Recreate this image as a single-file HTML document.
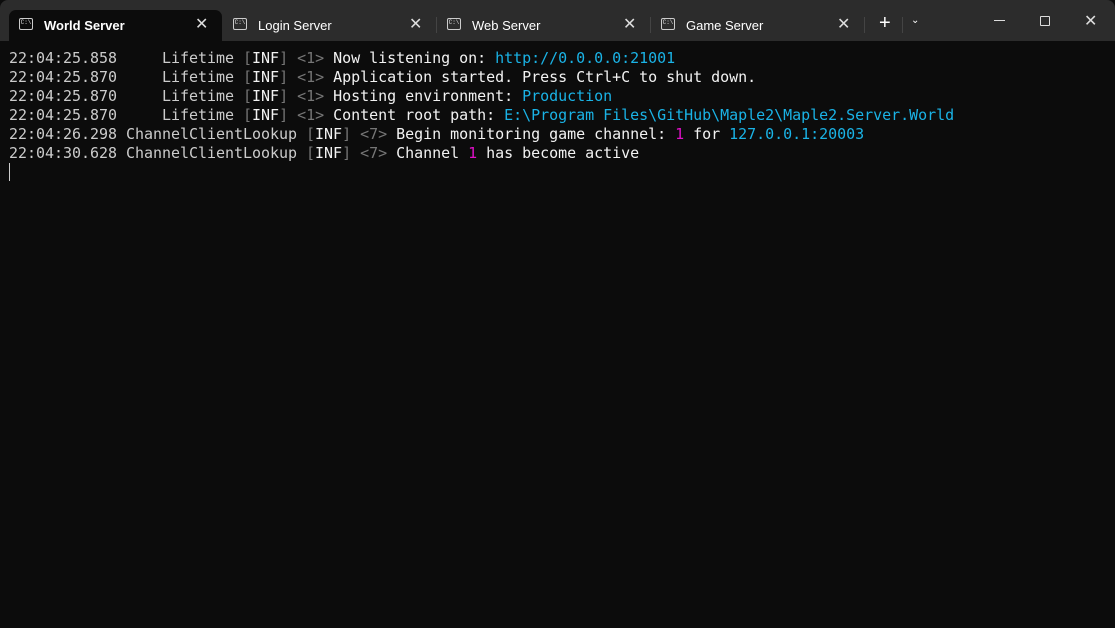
<!DOCTYPE html>
<html><head><meta charset="utf-8"><style>
*{margin:0;padding:0;box-sizing:border-box}
html,body{width:1115px;height:628px;overflow:hidden;background:#0c0c0c}
.bar{position:absolute;left:0;top:0;width:1115px;height:41px;background:#2c2c2c;border-radius:8px 8px 0 0;font-family:"Liberation Sans",sans-serif;font-size:13px;color:#fff}
.tab{position:absolute;top:10px;height:31px;display:flex;align-items:center}
.tab.active{background:#0c0c0c;border-radius:7px 7px 0 0}
.ic{position:absolute;top:18px;width:14px;height:12px;border:1px solid #ccc;border-radius:2px;font-size:6px;line-height:8px;text-align:center;color:#ddd;font-family:"Liberation Mono",monospace}
.t{position:absolute;top:18px}
.x{position:absolute;top:14px;font-size:16px;color:#ddd}
.sep{position:absolute;top:17px;width:1px;height:16px;background:#444}
.term{position:absolute;left:9px;top:49px;font-family:"DejaVu Sans Mono",monospace;font-size:15px;letter-spacing:-0.03px;line-height:19px;color:#cccccc;white-space:pre}
.g{color:#767676}.w{color:#f2f2f2}.c{color:#1ab3e6}.m{color:#e010c8}
.cur{position:absolute;left:9px;top:163px;width:1px;height:18px;background:#ccc}
</style></head><body>
<div class="bar">
<div class="tab active" style="left:9px;width:213px"></div>
<div class="ic" style="left:19px">C:\</div><div class="t" style="left:44px;font-weight:bold">World Server</div><div class="x" style="left:195px">✕</div>
<div class="ic" style="left:233px">C:\</div><div class="t" style="left:258px">Login Server</div><div class="x" style="left:409px">✕</div>
<div class="sep" style="left:436px"></div>
<div class="ic" style="left:447px">C:\</div><div class="t" style="left:472px">Web Server</div><div class="x" style="left:623px">✕</div>
<div class="sep" style="left:650px"></div>
<div class="ic" style="left:661px">C:\</div><div class="t" style="left:686px">Game Server</div><div class="x" style="left:837px">✕</div>
<div class="sep" style="left:864px"></div>
<div class="t" style="left:879px;top:12px;font-size:20px;font-weight:300">+</div>
<div class="sep" style="left:902px"></div>
<div class="t" style="left:911px;top:15px;font-size:10px">⌄</div>
<div style="position:absolute;left:994px;top:20px;width:11px;height:1px;background:#ddd"></div>
<div style="position:absolute;left:1040px;top:16px;width:10px;height:10px;border:1px solid #ddd;border-radius:1px"></div>
<div class="x" style="left:1084px;top:11px">✕</div>
</div>
<div class="term">22:04:25.858     Lifetime <span class="g">[</span><span class="w">INF</span><span class="g">] &lt;1&gt;</span> <span class="w">Now listening on: </span><span class="c">http://0.0.0.0:21001</span>
22:04:25.870     Lifetime <span class="g">[</span><span class="w">INF</span><span class="g">] &lt;1&gt;</span> <span class="w">Application started. Press Ctrl+C to shut down.</span>
22:04:25.870     Lifetime <span class="g">[</span><span class="w">INF</span><span class="g">] &lt;1&gt;</span> <span class="w">Hosting environment: </span><span class="c">Production</span>
22:04:25.870     Lifetime <span class="g">[</span><span class="w">INF</span><span class="g">] &lt;1&gt;</span> <span class="w">Content root path: </span><span class="c">E:\Program Files\GitHub\Maple2\Maple2.Server.World</span>
22:04:26.298 ChannelClientLookup <span class="g">[</span><span class="w">INF</span><span class="g">] &lt;7&gt;</span> <span class="w">Begin monitoring game channel: </span><span class="m">1</span><span class="w"> for </span><span class="c">127.0.0.1:20003</span>
22:04:30.628 ChannelClientLookup <span class="g">[</span><span class="w">INF</span><span class="g">] &lt;7&gt;</span> <span class="w">Channel </span><span class="m">1</span><span class="w"> has become active</span></div>
<div class="cur"></div>
</body></html>
